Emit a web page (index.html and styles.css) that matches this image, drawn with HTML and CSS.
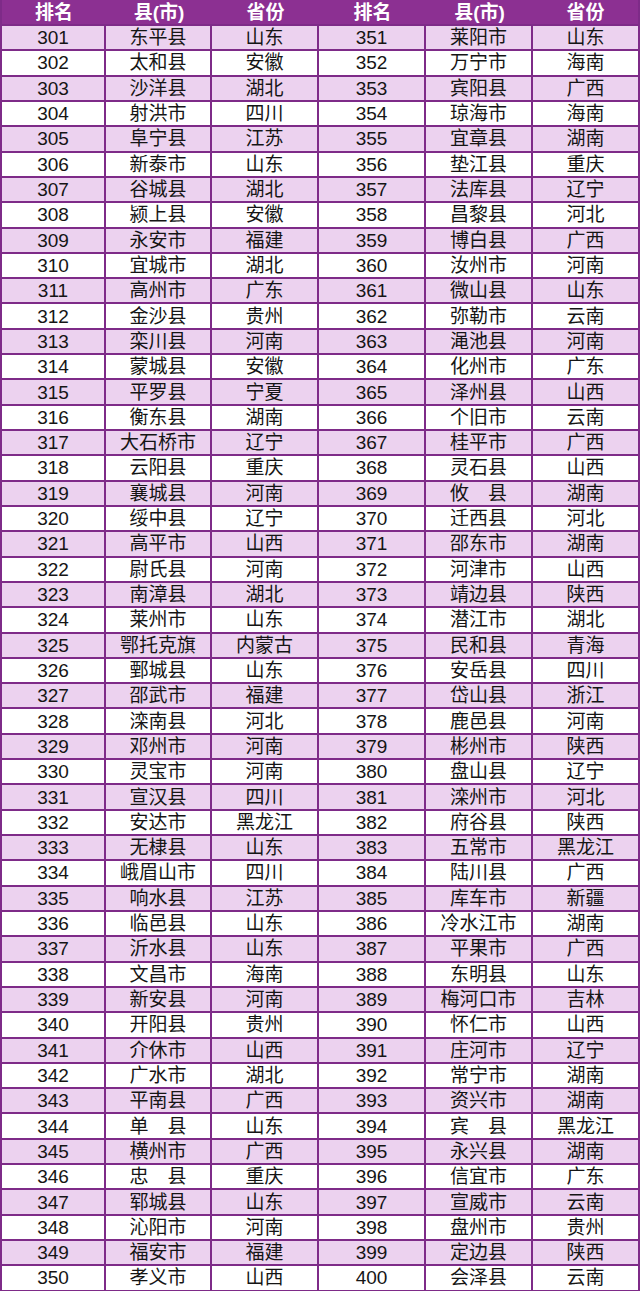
FILE: index.html
```html
<!DOCTYPE html>
<html lang="zh">
<head>
<meta charset="utf-8">
<title>排名</title>
<link rel="stylesheet" href="styles.css">
</head>
<body>
<div class="table">
<div class="row head"><span>排名</span><span>县(市)</span><span>省份</span><span>排名</span><span>县(市)</span><span>省份</span></div>
<div class="row alt"><span>301</span><span>东平县</span><span>山东</span><span>351</span><span>莱阳市</span><span>山东</span></div>
<div class="row"><span>302</span><span>太和县</span><span>安徽</span><span>352</span><span>万宁市</span><span>海南</span></div>
<div class="row alt"><span>303</span><span>沙洋县</span><span>湖北</span><span>353</span><span>宾阳县</span><span>广西</span></div>
<div class="row"><span>304</span><span>射洪市</span><span>四川</span><span>354</span><span>琼海市</span><span>海南</span></div>
<div class="row alt"><span>305</span><span>阜宁县</span><span>江苏</span><span>355</span><span>宜章县</span><span>湖南</span></div>
<div class="row"><span>306</span><span>新泰市</span><span>山东</span><span>356</span><span>垫江县</span><span>重庆</span></div>
<div class="row alt"><span>307</span><span>谷城县</span><span>湖北</span><span>357</span><span>法库县</span><span>辽宁</span></div>
<div class="row"><span>308</span><span>颍上县</span><span>安徽</span><span>358</span><span>昌黎县</span><span>河北</span></div>
<div class="row alt"><span>309</span><span>永安市</span><span>福建</span><span>359</span><span>博白县</span><span>广西</span></div>
<div class="row"><span>310</span><span>宜城市</span><span>湖北</span><span>360</span><span>汝州市</span><span>河南</span></div>
<div class="row alt"><span>311</span><span>高州市</span><span>广东</span><span>361</span><span>微山县</span><span>山东</span></div>
<div class="row"><span>312</span><span>金沙县</span><span>贵州</span><span>362</span><span>弥勒市</span><span>云南</span></div>
<div class="row alt"><span>313</span><span>栾川县</span><span>河南</span><span>363</span><span>渑池县</span><span>河南</span></div>
<div class="row"><span>314</span><span>蒙城县</span><span>安徽</span><span>364</span><span>化州市</span><span>广东</span></div>
<div class="row alt"><span>315</span><span>平罗县</span><span>宁夏</span><span>365</span><span>泽州县</span><span>山西</span></div>
<div class="row"><span>316</span><span>衡东县</span><span>湖南</span><span>366</span><span>个旧市</span><span>云南</span></div>
<div class="row alt"><span>317</span><span>大石桥市</span><span>辽宁</span><span>367</span><span>桂平市</span><span>广西</span></div>
<div class="row"><span>318</span><span>云阳县</span><span>重庆</span><span>368</span><span>灵石县</span><span>山西</span></div>
<div class="row alt"><span>319</span><span>襄城县</span><span>河南</span><span>369</span><span>攸　县</span><span>湖南</span></div>
<div class="row"><span>320</span><span>绥中县</span><span>辽宁</span><span>370</span><span>迁西县</span><span>河北</span></div>
<div class="row alt"><span>321</span><span>高平市</span><span>山西</span><span>371</span><span>邵东市</span><span>湖南</span></div>
<div class="row"><span>322</span><span>尉氏县</span><span>河南</span><span>372</span><span>河津市</span><span>山西</span></div>
<div class="row alt"><span>323</span><span>南漳县</span><span>湖北</span><span>373</span><span>靖边县</span><span>陕西</span></div>
<div class="row"><span>324</span><span>莱州市</span><span>山东</span><span>374</span><span>潜江市</span><span>湖北</span></div>
<div class="row alt"><span>325</span><span>鄂托克旗</span><span>内蒙古</span><span>375</span><span>民和县</span><span>青海</span></div>
<div class="row"><span>326</span><span>鄄城县</span><span>山东</span><span>376</span><span>安岳县</span><span>四川</span></div>
<div class="row alt"><span>327</span><span>邵武市</span><span>福建</span><span>377</span><span>岱山县</span><span>浙江</span></div>
<div class="row"><span>328</span><span>滦南县</span><span>河北</span><span>378</span><span>鹿邑县</span><span>河南</span></div>
<div class="row alt"><span>329</span><span>邓州市</span><span>河南</span><span>379</span><span>彬州市</span><span>陕西</span></div>
<div class="row"><span>330</span><span>灵宝市</span><span>河南</span><span>380</span><span>盘山县</span><span>辽宁</span></div>
<div class="row alt"><span>331</span><span>宣汉县</span><span>四川</span><span>381</span><span>滦州市</span><span>河北</span></div>
<div class="row"><span>332</span><span>安达市</span><span>黑龙江</span><span>382</span><span>府谷县</span><span>陕西</span></div>
<div class="row alt"><span>333</span><span>无棣县</span><span>山东</span><span>383</span><span>五常市</span><span>黑龙江</span></div>
<div class="row"><span>334</span><span>峨眉山市</span><span>四川</span><span>384</span><span>陆川县</span><span>广西</span></div>
<div class="row alt"><span>335</span><span>响水县</span><span>江苏</span><span>385</span><span>库车市</span><span>新疆</span></div>
<div class="row"><span>336</span><span>临邑县</span><span>山东</span><span>386</span><span>冷水江市</span><span>湖南</span></div>
<div class="row alt"><span>337</span><span>沂水县</span><span>山东</span><span>387</span><span>平果市</span><span>广西</span></div>
<div class="row"><span>338</span><span>文昌市</span><span>海南</span><span>388</span><span>东明县</span><span>山东</span></div>
<div class="row alt"><span>339</span><span>新安县</span><span>河南</span><span>389</span><span>梅河口市</span><span>吉林</span></div>
<div class="row"><span>340</span><span>开阳县</span><span>贵州</span><span>390</span><span>怀仁市</span><span>山西</span></div>
<div class="row alt"><span>341</span><span>介休市</span><span>山西</span><span>391</span><span>庄河市</span><span>辽宁</span></div>
<div class="row"><span>342</span><span>广水市</span><span>湖北</span><span>392</span><span>常宁市</span><span>湖南</span></div>
<div class="row alt"><span>343</span><span>平南县</span><span>广西</span><span>393</span><span>资兴市</span><span>湖南</span></div>
<div class="row"><span>344</span><span>单　县</span><span>山东</span><span>394</span><span>宾　县</span><span>黑龙江</span></div>
<div class="row alt"><span>345</span><span>横州市</span><span>广西</span><span>395</span><span>永兴县</span><span>湖南</span></div>
<div class="row"><span>346</span><span>忠　县</span><span>重庆</span><span>396</span><span>信宜市</span><span>广东</span></div>
<div class="row alt"><span>347</span><span>郓城县</span><span>山东</span><span>397</span><span>宣威市</span><span>云南</span></div>
<div class="row"><span>348</span><span>沁阳市</span><span>河南</span><span>398</span><span>盘州市</span><span>贵州</span></div>
<div class="row alt"><span>349</span><span>福安市</span><span>福建</span><span>399</span><span>定边县</span><span>陕西</span></div>
<div class="row"><span>350</span><span>孝义市</span><span>山西</span><span>400</span><span>会泽县</span><span>云南</span></div>
</div>
</body>
</html>
```
FILE: styles.css
```css
html, body {
  margin: 0;
  padding: 0;
  background: #ffffff;
}
.table {
  width: 640px;
  height: 1291px;
  box-sizing: border-box;
  padding: 0 2px;
  background: #7e2b88;
  display: flex;
  flex-direction: column;
  gap: 2px;
  font-family: "Liberation Sans", "Noto Sans CJK SC", sans-serif;
  font-size: 19px;
  color: #151515;
}
.row {
  display: grid;
  grid-template-columns: 102px 104px 105px 105px 105px 105px;
  column-gap: 2px;
  height: 23.32px;
}
.row span {
  background: #ffffff;
  display: flex;
  align-items: center;
  justify-content: center;
  line-height: 1;
  white-space: nowrap;
}
.row.alt span {
  background: #ecd2ef;
}
.row.head {
  height: 24px;
  column-gap: 0;
  grid-template-columns: 104px 106px 107px 107px 107px 105px;
}
.row.head span {
  background: #8c3092;
  color: #ffffff;
  font-weight: bold;
  font-size: 19px;
}
```
